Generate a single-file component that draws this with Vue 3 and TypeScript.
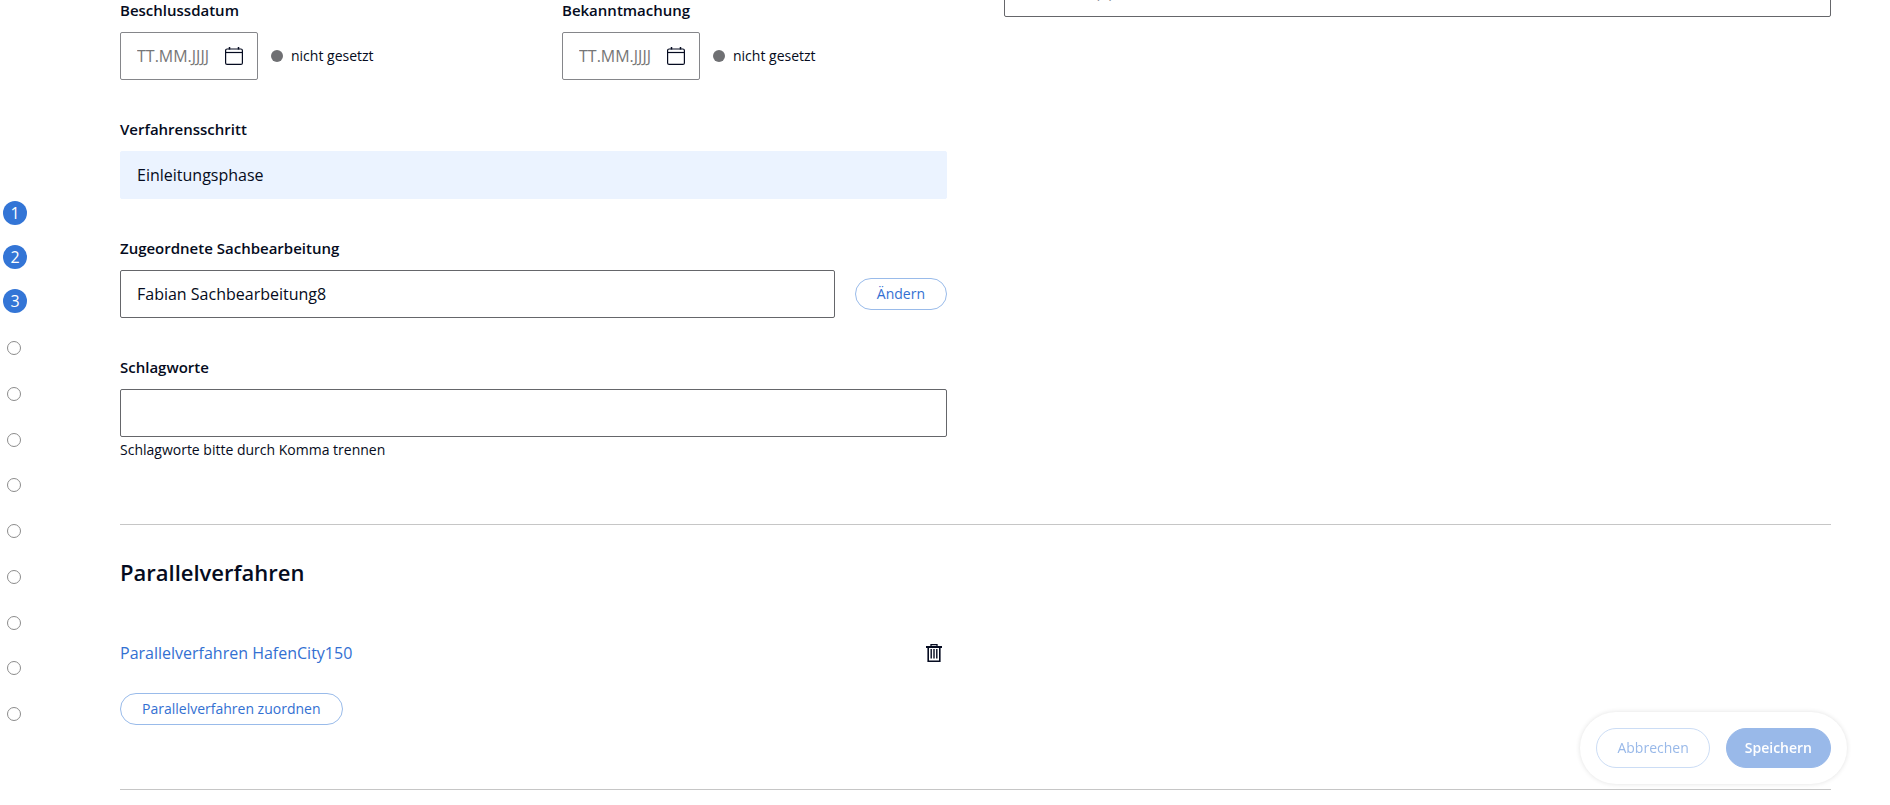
<script setup lang="ts">
import { ref } from 'vue'

interface DateField {
  id: string
  label: string
  value: string
  status: string
}

const dates = ref<DateField[]>([
  { id: 'beschluss', label: 'Beschlussdatum', value: '', status: 'nicht gesetzt' },
  { id: 'bekannt', label: 'Bekanntmachung', value: '', status: 'nicht gesetzt' },
])
const activeSteps = [1, 2, 3]
const openSteps = [4, 5, 6, 7, 8, 9, 10, 11, 12]
const area = ref('Ortsteil/e (e)')
const step = ref('Einleitungsphase')
const clerk = ref('Fabian Sachbearbeitung8')
const keywords = ref('')
</script>

<template>
  <div class="page">
    <nav class="steps" aria-label="Abschnitte">
      <div class="steps-active">
        <button v-for="n in activeSteps" :key="n" type="button" class="step-number">{{ n }}</button>
      </div>
      <div class="steps-open">
        <button v-for="n in openSteps" :key="n" type="button" class="step-dot" :aria-label="`Abschnitt ${n}`"></button>
      </div>
    </nav>

    <main class="content">
      <section class="columns">
        <div class="column">
          <div class="dates">
            <div v-for="d in dates" :key="d.id" class="field">
              <label class="label" :for="d.id">{{ d.label }}</label>
              <div class="date-row">
                <div class="date-box">
                  <input :id="d.id" v-model="d.value" class="date-input" type="text" placeholder="TT.MM.JJJJ" />
                  <button type="button" class="icon-button" aria-label="Kalender öffnen">
                    <svg width="18" height="18" viewBox="0 0 18 18" fill="none" stroke="currentColor">
                      <rect x="0.6" y="2" width="16.8" height="15.4" rx="1.5" stroke-width="1.2" />
                      <path d="M1 5.5H17" stroke-width="1.2" />
                      <path d="M4.5 0V2.5M13.5 0V2.5" stroke-width="1.5" />
                    </svg>
                  </button>
                </div>
                <span class="status"><span class="status-dot"></span>{{ d.status }}</span>
              </div>
            </div>
          </div>

          <div class="field">
            <label class="label" for="schritt">Verfahrensschritt</label>
            <input id="schritt" v-model="step" class="input input-readonly" type="text" readonly />
          </div>

          <div class="field">
            <label class="label" for="sachbearbeitung">Zugeordnete Sachbearbeitung</label>
            <div class="input-row">
              <input id="sachbearbeitung" v-model="clerk" class="input" type="text" />
              <button type="button" class="pill">Ändern</button>
            </div>
          </div>

          <div class="field">
            <label class="label" for="schlagworte">Schlagworte</label>
            <input id="schlagworte" v-model="keywords" class="input" type="text" aria-describedby="hinweis" />
            <p id="hinweis" class="hint">Schlagworte bitte durch Komma trennen</p>
          </div>
        </div>

        <div class="column column-scrolled">
          <input v-model="area" class="input" type="text" aria-label="Gebiet" />
        </div>
      </section>

      <section class="parallel">
        <h2 class="heading">Parallelverfahren</h2>
        <div class="parallel-item">
          <a class="link" href="#">Parallelverfahren HafenCity150</a>
          <button type="button" class="icon-button" aria-label="Parallelverfahren entfernen">
            <svg width="16" height="18" viewBox="0 0 16 18" fill="none" stroke="currentColor">
              <path d="M5 2.5V0.6H11V2.5" stroke-width="1.3" />
              <path d="M0 3H16" stroke-width="2" />
              <path d="M2.2 3V17.2H13.8V3" stroke-width="1.6" />
              <path d="M5.2 5V14.5M8 5V14.5M10.8 5V14.5" stroke-width="1.4" />
            </svg>
          </button>
        </div>
        <button type="button" class="pill">Parallelverfahren zuordnen</button>
      </section>
      <hr class="rule" />
    </main>

    <div class="actions">
      <button type="button" class="action action-cancel" disabled>Abbrechen</button>
      <button type="button" class="action action-save" disabled>Speichern</button>
    </div>
  </div>
</template>

<style>
html,
body {
  margin: 0;
  background: #fff;
}
</style>

<style scoped>
.page,
.page * {
  box-sizing: border-box;
}

.page {
  display: flex;
  height: 100vh;
  overflow: hidden;
  font-family: 'Open Sans', 'Noto Sans', sans-serif;
  font-size: 16px;
  line-height: 24px;
  color: #050b20;
}

button,
input {
  font: inherit;
  color: inherit;
}

button {
  padding: 0;
  cursor: pointer;
}

.steps {
  flex: none;
  width: 120px;
  padding: 201px 0 0 3px;
}

.steps-active {
  display: flex;
  flex-direction: column;
  gap: 20px;
}

.step-number {
  width: 24px;
  height: 24px;
  border: 0;
  border-radius: 50%;
  background: #3375d6;
  color: #fff;
  line-height: 24px;
}

.steps-open {
  display: flex;
  flex-direction: column;
  justify-content: space-between;
  height: 380px;
  margin-top: 28px;
  padding-left: 4px;
}

.step-dot {
  width: 14px;
  height: 14px;
  border: 1px solid #8c8c8c;
  border-radius: 50%;
  background: #fff;
}

.content {
  flex: 1;
  min-width: 0;
  margin-right: 59px;
}

.columns {
  display: grid;
  grid-template-columns: 1fr 1fr;
  gap: 57px;
  padding-bottom: 64px;
  border-bottom: 1px solid #c6c6c6;
}

.column {
  display: flex;
  flex-direction: column;
  gap: 39px;
}

.column-scrolled {
  margin-top: -31px;
}

.dates {
  display: grid;
  grid-template-columns: 1fr 1fr;
  gap: 57px;
}

.label {
  display: block;
  height: 32px;
  line-height: 20px;
  font-size: 15px;
  font-weight: 600;
}

.date-row,
.input-row {
  display: flex;
  align-items: center;
}

.input-row {
  gap: 20px;
}

.date-box {
  display: flex;
  align-items: center;
  width: 138px;
  height: 48px;
  padding: 0 14px 0 16px;
  border: 1px solid #85868a;
  border-radius: 2px;
}

.date-input {
  flex: 1;
  min-width: 0;
  padding: 0;
  border: 0;
  outline: 0;
  background: none;
}

.date-input::placeholder {
  color: #767676;
  opacity: 1;
}

.icon-button {
  display: flex;
  border: 0;
  background: none;
}

.status {
  display: flex;
  align-items: center;
  gap: 8px;
  margin-left: 13px;
  font-size: 14px;
}

.status-dot {
  width: 12px;
  height: 12px;
  border-radius: 50%;
  background: #6f7073;
}

.input {
  display: block;
  flex: 1;
  width: 100%;
  min-width: 0;
  height: 48px;
  padding: 0 16px;
  border: 1px solid #65666a;
  border-radius: 2px;
  background: #fff;
}

.column-scrolled .input {
  flex: none;
  padding-bottom: 2px;
}

.input-readonly {
  border-color: #ebf3ff;
  background: #ebf3ff;
}

.hint {
  margin: 3px 0 0;
  line-height: 20px;
  font-size: 14px;
}

.pill {
  height: 32px;
  padding: 0 21px;
  border: 1px solid #99bbea;
  border-radius: 16px;
  background: #fff;
  color: #3370d2;
  font-size: 14px;
}

.parallel {
  width: calc(50% - 28px);
  padding-bottom: 64px;
}

.heading {
  margin: 31px 0 53px;
  font-size: 22px;
  font-weight: 600;
  line-height: 32px;
}

.parallel-item {
  display: flex;
  align-items: center;
  justify-content: space-between;
  margin-bottom: 28px;
  padding-right: 6px;
}

.link {
  color: #3370d2;
  text-decoration: none;
}

.rule {
  margin: 0;
  border: 0;
  border-top: 1px solid #c6c6c6;
}

.actions {
  position: fixed;
  right: 43px;
  bottom: 21px;
  display: flex;
  gap: 16px;
  padding: 16px;
  border-radius: 36px;
  background: #fff;
  box-shadow: 0 0 5px rgba(0, 0, 0, 0.12);
}

.action {
  height: 40px;
  padding: 0 20px;
  border: 1px solid #ccddf5;
  border-radius: 20px;
  background: #fff;
  color: #99b9e9;
  font-size: 14px;
}

.action-save {
  padding: 0 18px;
  border-color: #99b9e9;
  background: #99b9e9;
  color: #fff;
  font-weight: 600;
}
</style>
